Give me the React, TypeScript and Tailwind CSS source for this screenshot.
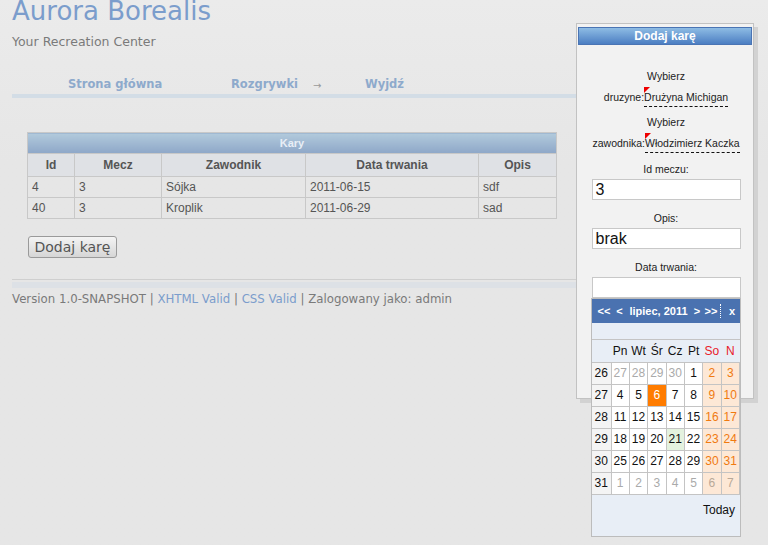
import React from "react"

const penalties = [
  { id: "4", match: "3", player: "Sójka", date: "2011-06-15", desc: "sdf" },
  { id: "40", match: "3", player: "Kroplik", date: "2011-06-29", desc: "sad" },
]

type Day = { n: number; kind?: "other" | "today" | "green" }

const weeks: { wk: number; days: Day[] }[] = [
  { wk: 26, days: [{ n: 27, kind: "other" }, { n: 28, kind: "other" }, { n: 29, kind: "other" }, { n: 30, kind: "other" }, { n: 1 }, { n: 2 }, { n: 3 }] },
  { wk: 27, days: [{ n: 4 }, { n: 5 }, { n: 6, kind: "today" }, { n: 7 }, { n: 8 }, { n: 9 }, { n: 10 }] },
  { wk: 28, days: [{ n: 11 }, { n: 12 }, { n: 13 }, { n: 14 }, { n: 15 }, { n: 16 }, { n: 17 }] },
  { wk: 29, days: [{ n: 18 }, { n: 19 }, { n: 20 }, { n: 21, kind: "green" }, { n: 22 }, { n: 23 }, { n: 24 }] },
  { wk: 30, days: [{ n: 25 }, { n: 26 }, { n: 27 }, { n: 28 }, { n: 29 }, { n: 30 }, { n: 31 }] },
  { wk: 31, days: [{ n: 1, kind: "other" }, { n: 2, kind: "other" }, { n: 3, kind: "other" }, { n: 4, kind: "other" }, { n: 5, kind: "other" }, { n: 6, kind: "other" }, { n: 7, kind: "other" }] },
]

const dayNames = ["Pn", "Wt", "Śr", "Cz", "Pt", "So", "N"]

function DayCell({ d, col }: { d: Day; col: number }) {
  const weekend = col >= 5
  let cls = "bg-white text-[#111]"
  if (weekend) cls = "bg-[#fde8d6] text-[#f07a10]"
  if (d.kind === "other") cls = weekend ? "bg-[#fde8d6] text-[#b8a898]" : "bg-white text-[#aaaaaa]"
  if (d.kind === "today") cls = "bg-[#ff7c00] text-white"
  if (d.kind === "green") cls = "bg-[#e4f2df] text-[#111]"
  return <td className={`border border-[#c4c4c4] text-center h-[22px] p-0 ${cls}`}>{d.n}</td>
}

function Calendar() {
  return (
    <div className="w-[150px] border border-[#bcbcbc] bg-[#e8eef6] font-['Liberation_Sans',Arial,sans-serif] text-[12px]">
      <div className="h-[24px] bg-[#4a72b0] text-white font-bold text-[11px] flex items-center px-[3px]">
        <span className="w-[18px]">&lt;&lt;</span>
        <span className="w-[13px]">&lt;</span>
        <span className="w-[65px]">lipiec, 2011</span>
        <span className="w-[12px]">&gt;</span>
        <span className="w-[16px]">&gt;&gt;</span>
        <span className="h-[14px] border-l border-dotted border-white ml-[1px]" />
        <span className="ml-[8px]">x</span>
      </div>
      <div className="h-[17px] border-b border-[#c4c4c4]" />
      <table className="w-full border-collapse table-fixed">
        <colgroup>
          <col className="w-[19px]" />
          {dayNames.map((d) => <col key={d} />)}
        </colgroup>
        <thead>
          <tr className="h-[22px]">
            <th />
            {dayNames.map((d, i) => (
              <th key={d} className={`font-normal p-0 ${i >= 5 ? "text-[#e8202a]" : "text-[#111]"}`}>{d}</th>
            ))}
          </tr>
        </thead>
        <tbody>
          {weeks.map((w) => (
            <tr key={w.wk}>
              <td className="border border-[#c4c4c4] border-l-0 bg-[#f4f4f4] text-[#111] text-center h-[22px] p-0">{w.wk}</td>
              {w.days.map((d, i) => <DayCell key={i} d={d} col={i} />)}
            </tr>
          ))}
        </tbody>
      </table>
      <div className="h-[41px] text-right pr-[5px] pt-[6px] text-[#111]">Today</div>
    </div>
  )
}

function Editable({ label, value, className }: { label: string; value: string; className: string }) {
  return (
    <div className={`leading-[21px] ${className}`}>
      <div>Wybierz</div>
      <div className="flex justify-center items-baseline">
        <span>{label}</span>
        <span className="relative border-b border-dashed border-[#111] leading-[18px]">
          <span className="absolute left-0 top-[-1px] w-0 h-0 border-t-[6px] border-t-[#e00] border-r-[6px] border-r-transparent" />
          {value}
        </span>
      </div>
    </div>
  )
}

function Dialog() {
  return (
    <div className="absolute left-[576px] top-[23px] w-[178px] h-[376px] border border-[#c2c2c2] bg-[#f2f2f2] shadow-[4px_4px_0_#d2d2d2] font-['Liberation_Sans',Arial,sans-serif] text-[10.5px] text-[#222]">
      <div className="mx-[1px] mt-[3px] h-[18px] border border-[#4a74b4] bg-gradient-to-b from-[#8ebce4] to-[#4c7ec2] text-white font-bold text-[12px] text-center leading-[16px]">
        Dodaj karę
      </div>
      <div className="flex flex-col items-center text-center pt-[21px] pl-[2px]">
        <Editable className="" label="druzyne:" value="Drużyna Michigan" />
        <Editable className="mt-[4px]" label="zawodnika:" value="Włodzimierz Kaczka" />
        <div className="mt-[7px] leading-[16px]">Id meczu:</div>
        <div className="mt-[2px] w-[149px] h-[21px] bg-white border border-[#c8c8c8] text-[16px] leading-[19px] text-left pl-[3px] text-[#111]">3</div>
        <div className="mt-[10px] leading-[16px]">Opis:</div>
        <div className="mt-[2px] w-[149px] h-[21px] bg-white border border-[#c8c8c8] text-[16px] leading-[19px] text-left pl-[3px] text-[#111]">brak</div>
        <div className="mt-[10px] leading-[16px]">Data trwania:</div>
        <div className="mt-[2px] w-[149px] h-[21px] bg-white border border-[#c8c8c8]" />
        <Calendar />
      </div>
    </div>
  )
}

export default function App() {
  return (
    <div className="relative w-[768px] h-[545px] overflow-hidden bg-gradient-to-b from-[#ebebeb] to-[#e6e6e6] to-[30%] font-['DejaVu_Sans',Verdana,sans-serif]">
      <div className="px-[12px]">
        <div className="text-[26px] leading-[26px] text-[#7b9dcc] -mt-[2px]">Aurora Borealis</div>
        <div className="text-[12.5px] text-[#7a7a7a] mt-[10px] leading-[16px]">Your Recreation Center</div>
        <nav className="flex items-center mt-[26px] h-[18px] text-[11.5px] font-bold text-[#8eaacc]">
          <span className="ml-[56px] w-[163px]">Strona główna</span>
          <span className="w-[82px]">Rozgrywki</span>
          <span className="w-[52px] font-normal text-[#999] text-[10px]">→</span>
          <span>Wyjdź</span>
        </nav>
        <div className="h-[4px] bg-[#d3dde6]" />

        <table className="ml-[15px] mt-[34px] w-[530px] border-collapse font-['Liberation_Sans',Arial,sans-serif] text-[12px] text-[#555]">
          <thead>
            <tr>
              <th colSpan={5} className="h-[21px] border border-[#c8c8c8] bg-gradient-to-b from-[#b2cadc] to-[#8ea7c8] text-[#e8eef6] font-bold text-[11px] p-0">Kary</th>
            </tr>
            <tr className="h-[23px] bg-[#dfe1e5]">
              <th className="w-[47px] border border-[#c8c8c8] font-bold p-0">Id</th>
              <th className="w-[87px] border border-[#c8c8c8] font-bold p-0">Mecz</th>
              <th className="w-[144px] border border-[#c8c8c8] font-bold p-0">Zawodnik</th>
              <th className="w-[173px] border border-[#c8c8c8] font-bold p-0">Data trwania</th>
              <th className="border border-[#c8c8c8] font-bold p-0">Opis</th>
            </tr>
          </thead>
          <tbody>
            {penalties.map((p) => (
              <tr key={p.id} className="h-[21px]">
                <td className="border border-[#c8c8c8] px-[4px] py-0">{p.id}</td>
                <td className="border border-[#c8c8c8] px-[4px] py-0">{p.match}</td>
                <td className="border border-[#c8c8c8] px-[4px] py-0">{p.player}</td>
                <td className="border border-[#c8c8c8] px-[4px] py-0">{p.date}</td>
                <td className="border border-[#c8c8c8] px-[4px] py-0">{p.desc}</td>
              </tr>
            ))}
          </tbody>
        </table>

        <button className="ml-[16px] mt-[17px] w-[89px] h-[22px] rounded-[3px] border border-[#9a9a9a] bg-gradient-to-b from-[#f4f4f4] to-[#d6d6d6] text-[14px] text-[#555] leading-[18px]">
          Dodaj karę
        </button>

        <div className="mt-[20px] border-t border-[#cfcfcf]" />
        <div className="mt-[2px] h-[6px] bg-[#dde1e6]" />
        <div className="mt-[3px] text-[11.75px] text-[#7a7a7a] leading-[16px]">
          Version 1.0-SNAPSHOT | <span className="text-[#7b9dcc]">XHTML Valid</span> | <span className="text-[#7b9dcc]">CSS Valid</span> | Zalogowany jako: admin
        </div>
      </div>
      <Dialog />
    </div>
  )
}
